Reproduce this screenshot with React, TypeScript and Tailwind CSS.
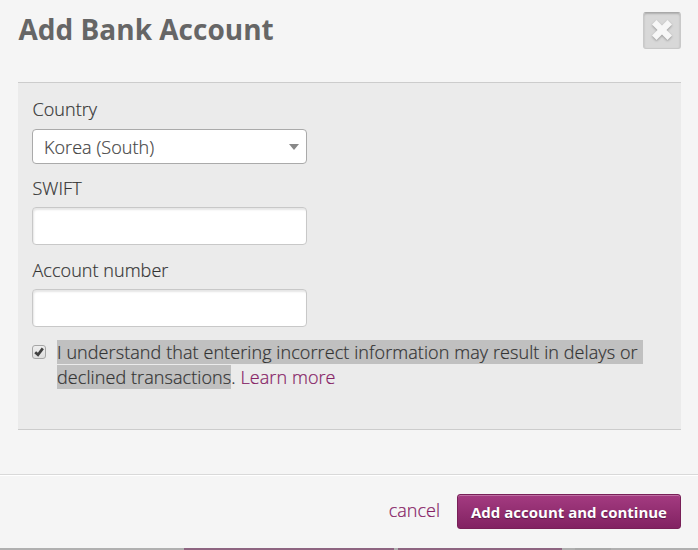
import { useState } from "react";

interface TextFieldProps {
    label: string;
    value: string;
    onChange: (value: string) => void;
}

function TextField({ label, value, onChange }: TextFieldProps) {
    return (
        <label className="block">
            <span className="block h-[25px] pl-[0.5px] leading-[25px]">{label}</span>
            <input
                type="text"
                value={value}
                onChange={(e) => onChange(e.target.value)}
                className="mt-[6px] block h-[38px] w-[275px] rounded border border-[#c8c8c8] bg-white px-3 shadow-[inset_1px_2px_2px_rgba(0,0,0,0.1)] outline-none"
            />
        </label>
    );
}

function CloseButton() {
    return (
        <button
            aria-label="Close"
            className="mt-3 flex h-[37px] w-[38px] items-center justify-center rounded-[3px] border border-[#c9c9c9] border-t-[#a9a9a9] bg-[#d8d8d8] pb-[1px] shadow-[inset_0_1px_2px_rgba(0,0,0,0.2)]"
        >
            <svg width="26" height="26" viewBox="0 0 26 26" className="drop-shadow-[0_1px_1px_rgba(0,0,0,0.3)]">
                <path d="M7.5 3L13 8.5L18.5 3L23 7.5L17.5 13L23 18.5L18.5 23L13 17.5L7.5 23L3 18.5L8.5 13L3 7.5Z" fill="#f7f7f7" />
            </svg>
        </button>
    );
}

export default function App() {
    const [swift, setSwift] = useState("");
    const [account, setAccount] = useState("");
    const [agreed, setAgreed] = useState(true);

    return (
        <div className="h-[550px] w-[698px] overflow-hidden bg-[#f5f5f5] font-['Open_Sans',sans-serif] text-[18px] font-light text-[#333] [-webkit-text-stroke:0.2px]">
            <header className="flex h-[82px] justify-between pr-[17px] pl-[18px]">
                <h1 className="pt-[10px] pl-[0.5px] text-[28px] leading-[38px] font-bold text-[#666] [-webkit-text-stroke:0]">Add Bank Account</h1>
                <CloseButton />
            </header>

            <main className="mr-[17px] ml-[18px] h-[348px] border-y border-[#ccc] bg-[#ebebeb] pt-[14px] pl-[14px] tracking-[0.05px]">
                <div className="h-[25px] pl-[0.5px] leading-[25px]">Country</div>
                <button className="mt-[7px] mb-3 flex h-[35px] w-[275px] items-center justify-between rounded border border-[#aaa] bg-white pr-[7px] pl-[11px] text-[#444]">
                    <span className="pt-[2px]">Korea (South)</span>
                    <svg width="10" height="6" viewBox="0 0 10 6">
                        <path d="M0 0H10L5 6Z" fill="#888" />
                    </svg>
                </button>
                <div className="flex flex-col gap-[13px]">
                    <TextField label="SWIFT" value={swift} onChange={setSwift} />
                    <TextField label="Account number" value={account} onChange={setAccount} />
                </div>

                <div className="mt-[13px] flex leading-[25px]">
                    <button
                        role="checkbox"
                        aria-checked={agreed}
                        onClick={() => setAgreed(!agreed)}
                        className="mt-[5px] mr-[11px] flex h-[14px] w-[14px] shrink-0 items-center justify-center rounded-[3px] border border-[#a6a6a6] bg-linear-to-b from-[#eee] to-[#dedede]"
                    >
                        {agreed && (
                            <svg width="10" height="10" viewBox="0 0 10 10">
                                <path d="M1.2 5.2L4 7.8L8.8 1.4" fill="none" stroke="#404040" strokeWidth="2.7" />
                            </svg>
                        )}
                    </button>
                    <p className="tracking-[0.085px]">
                        <span className="bg-[#c0c0c0]">
                            <span className="pr-[5px]">I understand that entering incorrect information may result in delays or</span>
                            <br />
                            declined transactions
                        </span>
                        . <a href="#" className="text-[#862165]">Learn more</a>
                    </p>
                </div>
            </main>

            <footer className="mt-[44px] flex h-[74px] items-start justify-end border-t border-[#d9d9d9] pr-[17px] shadow-[inset_0_1px_0_#fff]">
                <a href="#" className="mt-[23px] mr-[17px] leading-[25px] text-[#862165]">cancel</a>
                <button className="mt-[19px] h-[35px] w-[224px] rounded-[3px] border border-[#782058] bg-linear-to-b from-[#a43b81] to-[#822262] pt-[2px] text-[15px] font-bold text-white shadow-[inset_0_1px_0_#bd70a2] [-webkit-text-stroke:0] [text-shadow:0_1px_1px_rgba(0,0,0,0.4)]">
                    Add account and continue
                </button>
            </footer>

            {/* sliver of the page behind the dialog */}
            <div className="flex h-[2px] bg-[#b0b0b0]">
                <div className="ml-[184px] w-[210px] bg-[#8e6581]" />
                <div className="ml-[4px] w-[164px] bg-[#8e6581]" />
                <div className="ml-[13px] w-[36px] bg-[#a8a8a8]" />
            </div>
        </div>
    );
}
